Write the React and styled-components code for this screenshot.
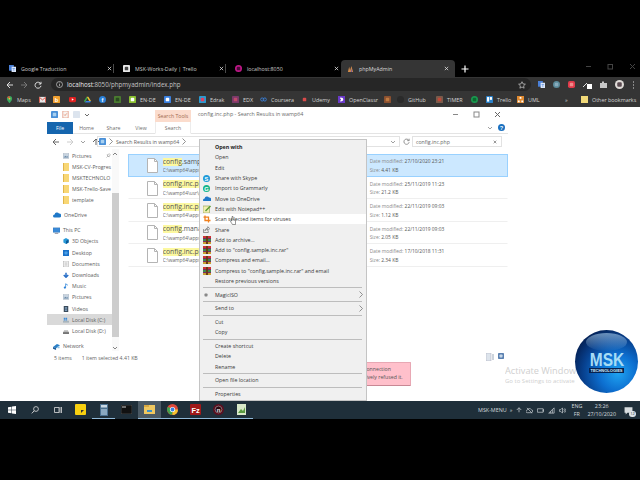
import React from 'react';
import styled, { createGlobalStyle } from 'styled-components';

const GlobalStyle = createGlobalStyle`
  html, body { margin: 0; padding: 0; background: #000; }
  * { box-sizing: border-box; }
`;

const uiFont = `'Open Sans', 'Liberation Sans', sans-serif`;

const Screen = styled.div`
  width: 640px;
  height: 480px;
  background: #000;
  overflow: hidden;
  display: flex;
  flex-direction: column;
  font-family: ${uiFont};
`;

// chrome
const TabStrip = styled.div`
  margin-top: 60px;
  height: 17px;
  display: flex;
  align-items: stretch;
  flex-shrink: 0;
`;
const Tab = styled.div`
  width: ${(p) => p.$w}px;
  display: flex;
  align-items: center;
  gap: 5px;
  padding: ${(p) => (p.$active ? '0 6px 0 6px' : '0 2px 0 9px')};
  color: ${(p) => (p.$active ? '#dcdcdc' : '#c8c8c8')};
  background: ${(p) => (p.$active ? '#353535' : 'transparent')};
  border-radius: ${(p) => (p.$active ? '4px 4px 0 0' : '0')};
  font-size: 5.3px;
  white-space: nowrap;
`;
const TabClose = styled.span`
  margin-left: auto;
  display: flex;
`;
const TabDivider = styled.div`
  width: 1px;
  height: 9px;
  align-self: center;
  background: #4a4a4a;
  margin-left: -1px;
`;
const NewTab = styled.span`
  display: flex;
  align-items: center;
  margin-left: 6px;
`;
const WinButtons = styled.div`
  margin-left: auto;
  display: flex;
  align-items: flex-start;
  gap: 15px;
  padding: 3px 4px 0 0;
`;
const Toolbar = styled.div`
  height: 15px;
  background: #353535;
  display: flex;
  align-items: center;
  padding-left: 6px;
  flex-shrink: 0;
`;
const NavArrows = styled.div`
  display: flex;
  align-items: center;
  gap: 6px;
  width: 45px;
`;
const Omnibox = styled.div`
  width: 480px;
  height: 13px;
  background: #262626;
  border-radius: 7px;
  display: flex;
  align-items: center;
  gap: 4px;
  padding: 0 5px;
  color: #c4c4c4;
  font-size: 6.2px;
`;
const UrlHost = styled.span`
  color: #e8e8e8;
`;
const StarSlot = styled.span`
  margin-left: auto;
  display: flex;
`;
const Extensions = styled.div`
  flex: 1;
  display: flex;
  align-items: center;
  gap: 8px;
  padding-left: 7px;
`;
const Bookmarks = styled.div`
  height: 15px;
  background: #353535;
  display: flex;
  align-items: center;
  padding-left: 6px;
  flex-shrink: 0;
`;
const Bookmark = styled.div`
  width: ${(p) => p.$w}px;
  display: flex;
  align-items: center;
  gap: 4px;
  color: #d4d4d4;
  font-size: 5.4px;
  white-space: nowrap;
  flex-shrink: 0;
`;

// page below the browser chrome
const Page = styled.div`
  position: relative;
  height: 294px;
  background: #fff;
  flex-shrink: 0;
  padding-left: 47px;
  overflow: hidden;
`;
const Explorer = styled.div`
  width: 461px;
  display: flex;
  flex-direction: column;
  font-size: 5.2px;
  color: #5c5c5c;
`;
const TitleRow = styled.div`
  height: 15px;
  display: flex;
  align-items: flex-end;
`;
const QuickAccess = styled.div`
  width: 108px;
  height: 15px;
  display: flex;
  align-items: center;
  gap: 4px;
  padding-left: 4px;
`;
const ToolsTab = styled.div`
  width: 36px;
  height: 12px;
  background: #fbdccd;
  color: #a26a50;
  font-size: 5.2px;
  display: flex;
  align-items: center;
  justify-content: center;
`;
const WindowTitle = styled.span`
  height: 15px;
  line-height: 15px;
  margin-left: 7px;
  color: #6a6a6a;
  font-size: 5.4px;
`;
const WindowControls = styled.div`
  margin-left: auto;
  height: 15px;
  display: flex;
  align-items: center;
  gap: 14px;
  padding-right: 7px;
`;
const Ribbon = styled.div`
  height: 12px;
  display: flex;
  border-bottom: 1px solid #e4e4e4;
`;
const RibbonTab = styled.div`
  width: ${(p) => p.$w}px;
  height: ${(p) => (p.$file || p.$search ? '12px' : '11px')};
  display: flex;
  align-items: center;
  justify-content: center;
  background: ${(p) => (p.$file ? '#1565ae' : '#fff')};
  color: ${(p) => (p.$file ? '#fff' : '#6e6e6e')};
  border: ${(p) => (p.$search ? '1px solid #ececec' : 'none')};
  border-top: none;
  border-bottom: ${(p) => (p.$search ? '1px solid #fff' : 'none')};
`;
const RibbonEnd = styled.div`
  margin-left: auto;
  display: flex;
  align-items: center;
  gap: 5px;
  padding-right: 3px;
`;
const NavRow = styled.div`
  height: 15px;
  display: flex;
  align-items: center;
  padding-left: 5px;
`;
const NavButtons = styled.div`
  width: 45px;
  display: flex;
  align-items: center;
  gap: 6px;
`;
const AddressBox = styled.div`
  width: 303px;
  height: 11px;
  border: 1px solid #e2e2e2;
  display: flex;
  align-items: center;
  gap: 3px;
  padding: 0 3px 0 1px;
`;
const AddressEnd = styled.span`
  margin-left: auto;
  display: flex;
`;
const Refresh = styled.div`
  width: 12px;
  display: flex;
  justify-content: center;
`;
const SearchBox = styled.div`
  width: 90px;
  height: 11px;
  border: 1px solid #e2e2e2;
  display: flex;
  align-items: center;
  justify-content: space-between;
  padding: 0 4px 0 3px;
  color: #666;
`;
const SearchClear = styled.span`
  display: flex;
`;
const Content = styled.div`
  height: 204px;
  display: flex;
`;
const Sidebar = styled.div`
  width: 66px;
  padding-top: 1px;
  display: flex;
  flex-direction: column;
  overflow: hidden;
`;
const TreeRow = styled.div`
  height: 11.2px;
  margin-top: ${(p) => p.$gap || 0}px;
  padding-left: ${(p) => (p.$top ? 6 : 16)}px;
  display: flex;
  align-items: center;
  gap: 3px;
  white-space: nowrap;
  overflow: hidden;
  background: ${(p) => (p.$selected ? '#d9d9d9' : 'transparent')};
  flex-shrink: 0;
`;
const Pin = styled.span`
  margin-left: auto;
  padding-right: 1px;
  display: flex;
`;
const Scrollbar = styled.div`
  width: 7px;
  height: 202px;
  background: #f9f9f9;
  display: flex;
  flex-direction: column;
  align-items: center;
`;
const ScrollEnd = styled.div`
  height: 6px;
  display: flex;
  align-items: center;
  justify-content: center;
  margin-top: ${(p) => (p.$bottom ? 'auto' : '2px')};
  transform: ${(p) => (p.$bottom ? 'none' : 'rotate(180deg)')};
`;
const ScrollThumb = styled.div`
  margin-top: 36px;
  width: 7px;
  height: 144px;
  background: #cdcdcd;
`;
const Results = styled.div`
  width: 388px;
  margin-left: 9px;
  padding-top: 5px;
`;
const ResultRow = styled.div`
  height: ${(p) => (p.$selected ? 23 : 22.4)}px;
  display: flex;
  align-items: center;
  background: ${(p) => (p.$selected ? '#cce8ff' : '#fff')};
  border: 1px solid ${(p) => (p.$selected ? '#99d1ff' : 'transparent')};
  border-bottom-color: ${(p) => (p.$selected ? '#99d1ff' : '#efefef')};
  padding-left: 18px;
`;
const FileCell = styled.div`
  width: 223px;
  display: flex;
  align-items: center;
  gap: 5px;
`;
const FileText = styled.div`
  width: 36px;
  overflow: hidden;
  display: flex;
  flex-direction: column;
  gap: 1.5px;
  white-space: nowrap;
`;
const FileName = styled.div`
  font-size: 6.8px;
  line-height: 8px;
  color: #555;
`;
const Hit = styled.span`
  background: #fcf8a0;
`;
const FilePath = styled.div`
  font-size: 4.8px;
  line-height: 6px;
  color: #666;
`;
const MetaCell = styled.div`
  display: flex;
  flex-direction: column;
  gap: 2.5px;
  font-size: 4.9px;
  line-height: 6px;
  white-space: nowrap;
  color: #8a8a8a;
`;
const MetaValue = styled.span`
  color: #555;
`;
const StatusBar = styled.div`
  height: 10px;
  display: flex;
  align-items: center;
  gap: 10px;
  padding-left: 7px;
  color: #666;
`;

// overlays on the page
const Menu = styled.div`
  position: absolute;
  left: 199px;
  top: 32px;
  width: 168px;
  height: 262px;
  background: #f0f0f0;
  border: 1px solid #c4c4c4;
  padding-top: 2px;
  font-size: 5.3px;
  color: #3a3a3a;
  display: flex;
  flex-direction: column;
`;
const MenuItem = styled.div`
  height: 10.3px;
  flex-shrink: 0;
  padding-left: 3px;
  padding-right: 3px;
  display: flex;
  align-items: center;
  white-space: nowrap;
  font-weight: ${(p) => (p.$bold ? 700 : 400)};
  background: ${(p) => (p.$hover ? '#fff' : 'transparent')};
  color: ${(p) => (p.$bold ? '#222' : '#3a3a3a')};
`;
const MenuIcon = styled.span`
  width: 12px;
  height: 8px;
  display: flex;
  align-items: center;
  flex-shrink: 0;
`;
const MenuArrow = styled.span`
  margin-left: auto;
  display: flex;
`;
const MenuLine = styled.div`
  height: 1px;
  margin: 1.2px 4px 1.2px 3px;
  background: #bdbdbd;
  flex-shrink: 0;
`;
const Cursor = styled.svg`
  position: absolute;
  left: 230px;
  top: 109px;
`;
const ErrorBox = styled.div`
  position: absolute;
  left: 340px;
  top: 255px;
  width: 71px;
  height: 24px;
  background: #ffc0cb;
  border: 1px solid #e8a8b4;
  border-bottom-color: #c88894;
  border-radius: 1px;
  padding: 2px 0 0 18px;
  color: #555;
  font-size: 5.2px;
  line-height: 8px;
  text-indent: 5px;
  white-space: nowrap;
`;
const PageIcons = styled.div`
  position: absolute;
  left: 486px;
  top: 246px;
  display: flex;
  gap: 4px;
`;
const Activate = styled.div`
  position: absolute;
  left: 505px;
  top: 257px;
  width: 71px;
  overflow: hidden;
  color: #cfcfcf;
  font-size: 9.2px;
  line-height: 13px;
  white-space: nowrap;
`;
const ActivateHint = styled.div`
  font-size: 6px;
  line-height: 9px;
`;
const Logo = styled.div`
  position: absolute;
  left: 575px;
  top: 223px;
  width: 63px;
  height: 63px;
  border-radius: 50%;
  overflow: hidden;
  background: radial-gradient(circle at 68% 68%, #1fa4f2 0%, #0d6fd0 30%, #073f8c 58%, #041c4c 82%, #020a20 100%);
  display: flex;
  flex-direction: column;
  align-items: center;
  justify-content: center;
  padding-top: 3px;
  &::before {
    content: '';
    position: absolute;
    left: 11px;
    top: 3px;
    width: 41px;
    height: 18px;
    border-radius: 50%;
    background: linear-gradient(180deg, rgba(190, 225, 250, 0.55), rgba(60, 130, 200, 0.05));
  }
`;
const LogoText = styled.div`
  font-family: 'Liberation Sans', sans-serif;
  font-weight: 700;
  font-size: 18px;
  line-height: 14px;
  color: #a6dcf5;
  transform: scaleX(0.86);
`;
const LogoSub = styled.div`
  font-family: 'Liberation Sans', sans-serif;
  font-weight: 700;
  font-size: 4px;
  line-height: 5px;
  padding: 0 1px;
  margin-top: 1px;
  background: #06224f;
  color: #d5ecf8;
`;

// taskbar
const Taskbar = styled.div`
  height: 18px;
  background: #1f2f3a;
  display: flex;
  align-items: stretch;
  flex-shrink: 0;
  color: #d5dade;
`;
const TaskSlot = styled.div`
  width: 23px;
  display: flex;
  align-items: center;
  justify-content: center;
  flex-shrink: 0;
  background: ${(p) => (p.$active ? '#4b5a65' : 'transparent')};
  border-bottom: 1px solid ${(p) => (p.$open ? '#8fb8d8' : 'transparent')};
`;
const Tray = styled.div`
  margin-left: auto;
  display: flex;
  align-items: center;
  font-size: 5.4px;
`;
const TrayIcons = styled.div`
  display: flex;
  align-items: center;
  gap: 4px;
  margin: 0 5px 0 3px;
`;
const Clock = styled.div`
  display: flex;
  flex-direction: column;
  align-items: center;
  gap: 2px;
  line-height: 6px;
  margin-left: ${(p) => p.$gap || 0}px;
`;
const NotifySlot = styled.span`
  position: relative;
  margin: 0 7px 0 8px;
  display: flex;
`;
const NotifyBadge = styled.span`
  position: absolute;
  right: -3px;
  bottom: -2px;
  width: 7px;
  height: 6px;
  border-radius: 3px;
  background: #dfe4e8;
  color: #1f2f3a;
  font-size: 4px;
  line-height: 6px;
  text-align: center;
`;

const Ic = ({ s = 7, v = 8, children }) => (
  <svg width={s} height={s} viewBox={`0 0 ${v} ${v}`} style={{ flexShrink: 0 }}>
    {children}
  </svg>
);

const letter = { fontFamily: 'Liberation Sans, sans-serif', fontWeight: 700, textAnchor: 'middle' };

const Doc = () => (
  <svg width="11" height="15" viewBox="0 0 11 15">
    <path d="M.5.500h7l3 3v11H.5z" fill="#fff" stroke="#b4b4b4" />
    <path d="M7.500.500v3h3" fill="none" stroke="#b4b4b4" />
  </svg>
);

const Folder = () => (
  <svg width="6" height="8" viewBox="0 0 6 8">
    <rect width="6" height="8" fill="#f8d775" />
    <rect width="1" height="8" fill="#e0b54a" />
  </svg>
);

// small coloured icon used where the picture is too small to tell more
const Dot = ({ c, s = 7, r = 1, inner }) => (
  <Ic s={s}>
    <rect width="8" height="8" rx={r} fill={c} />
    {inner && <rect x="2" y="2" width="4" height="4" rx="1" fill={inner} />}
  </Ic>
);

const Arrow = ({ dir = 'left', c = '#dcdcdc', s = 8, w = 1 }) => {
  const d = {
    left: 'M7 4H1M4 1 1 4l3 3',
    right: 'M1 4h6M4 1l3 3-3 3',
    up: 'M4 7V1M1 4l3-3 3 3',
    down: 'M4 1v6M1 4l3 3 3-3',
  }[dir];
  return (
    <Ic s={s}>
      <path d={d} fill="none" stroke={c} strokeWidth={w} />
    </Ic>
  );
};

const Chevron = ({ c = '#888', s = 6 }) => (
  <Ic s={s} v={6}>
    <path d="M1 2l2 2 2-2" fill="none" stroke={c} strokeWidth=".8" />
  </Ic>
);

const Caret = () => (
  <svg width="4" height="7" viewBox="0 0 4 7">
    <path d="M.5.500 3.500 3.500.5 6.500" fill="none" stroke="#777" strokeWidth=".8" />
  </svg>
);

const Cross = ({ c = '#e4e4e4', s = 5, w = 0.9 }) => (
  <Ic s={s} v={6}>
    <path d="M1 1l4 4M5 1 1 5" stroke={c} strokeWidth={w} />
  </Ic>
);

const Winrar = () => (
  <Ic s={8}>
    <rect width="8" height="8" fill="#7a2a6a" />
    <rect width="8" height="2" fill="#c33" />
    <rect y="3" width="8" height="2" fill="#3a8a4a" />
    <rect y="6" width="8" height="2" fill="#c8a030" />
    <rect x="3" width="2" height="8" fill="#6b3a1a" />
  </Ic>
);

const Cloud = ({ c = '#1e78c8', s = 8 }) => (
  <svg width={s} height={s * 0.7} viewBox="0 0 10 7">
    <path d="M2 7a2 2 0 0 1 0-4 3 3 0 0 1 5.500-1A2.500 2.500 0 0 1 8 7z" fill={c} />
  </svg>
);

const Badge = ({ c, t, tc = '#fff', r = 4, s = 7, f = 6.5 }) => (
  <Ic s={s}>
    <rect width="8" height="8" rx={r} fill={c} />
    <text x="4" y="6.300" fontSize={f} fill={tc} style={letter}>{t}</text>
  </Ic>
);

const Notepad = () => (
  <Ic s={8}>
    <rect y="1" width="6.500" height="7" fill="#f2efb0" stroke="#8a9a50" strokeWidth=".6" />
    <path d="M2 5.500 7 .5l1 1-5 5z" fill="#5a9a30" />
  </Ic>
);

const Scan = () => (
  <Ic s={8}>
    <path d="M2 .5v5h5.500M.5 2.200h5v5.300" fill="none" stroke="#f0801e" strokeWidth="1.300" />
  </Ic>
);

const ShareIcon = () => (
  <Ic>
    <path d="M.5 3.500v4h5.500V5.500M2 5.500C2.500 3.500 4 2.500 5.500 2.500V.8L7.700 3 5.500 5.200V3.800C4 3.800 3 4.400 2 5.500z" fill="none" stroke="#555" strokeWidth=".7" />
  </Ic>
);

const MapsPin = () => (
  <Ic>
    <path d="M4 0a3 3 0 0 1 3 3C7 5 4 8 4 8S1 5 1 3a3 3 0 0 1 3-3z" fill="#3aa860" />
    <path d="M1.300 1.800A3 3 0 0 1 4 0v3z" fill="#e84a3a" />
    <circle cx="4" cy="3" r="1" fill="#f4c430" />
  </Ic>
);
const Gmail = () => (
  <Ic>
    <rect y="1" width="8" height="6.500" fill="#e8e8e8" />
    <path d="M.5 7.500V1.500L4 4.500l3.500-3v6" fill="none" stroke="#d84a3a" strokeWidth="1" />
  </Ic>
);
const YouTube = () => (
  <Ic>
    <rect y="1" width="8" height="6" rx="1.500" fill="#e02020" />
    <path d="M3.200 2.700 5.500 4 3.200 5.300z" fill="#fff" />
  </Ic>
);
const Drive = () => (
  <Ic>
    <path d="M3 .8h2l3 5H6z" fill="#f4c430" />
    <path d="M3 .8 0 5.800l1 1.700 3-5z" fill="#3aa850" />
    <path d="M1 7.500h6l1-1.700H2.200z" fill="#3a80e0" />
  </Ic>
);
const Coursera = () => (
  <Ic>
    <circle cx="2.500" cy="4" r="1.800" fill="none" stroke="#3a80d8" />
    <circle cx="5.500" cy="4" r="1.800" fill="none" stroke="#3a80d8" />
  </Ic>
);
const OpenClass = () => (
  <Ic>
    <rect width="8" height="8" fill="#6a3ac8" />
    <path d="M2.500 1.800c3 0 3.500 1 3.500 2.200S5.500 6.200 2.500 6.200V5a1 1 0 0 0 0-2z" fill="#fff" />
  </Ic>
);
const Trello = () => (
  <Ic>
    <rect width="8" height="8" rx="1" fill="#2a80c8" />
    <rect x="1.200" y="1.200" width="2.400" height="5.200" fill="#fff" />
    <rect x="4.400" y="1.200" width="2.400" height="3.200" fill="#fff" />
  </Ic>
);
const Uml = () => (
  <Ic>
    <rect width="8" height="8" fill="#e08a30" />
    <path d="M3 1h2v2H3zM1 5h2v2H1zM5 5h2v2H5z" fill="#fff" />
  </Ic>
);
const Translate = () => (
  <Ic>
    <rect width="5.500" height="6.500" fill="#4a80d8" />
    <rect x="3" y="2" width="5" height="6" fill="#dbe6f8" />
    <path d="M4 4h3M5.500 3.500V7" stroke="#4a80d8" strokeWidth=".6" />
  </Ic>
);
const PhpMyAdmin = () => (
  <Ic>
    <path d="M1 8 2.500 2 4 8zM3 8 5 1l2 7z" fill="#d08a4a" />
    <path d="M4.300 8 5 4l.8 4z" fill="#7a5aa0" />
  </Ic>
);
const MonitorIcon = () => (
  <Ic>
    <rect y="1" width="8" height="5" fill="#3a8ad8" stroke="#2a6aa8" strokeWidth=".4" />
    <path d="M2 7.300h4" stroke="#889" />
  </Ic>
);
const CubeIcon = () => (
  <Ic s={6}>
    <path d="M4 0l3.500 2v4L4 8 .5 6V2z" fill="#2a9ad8" />
    <path d="M4 4v4l3.500-2V2z" fill="#0a5a98" />
  </Ic>
);
const DocumentsIcon = () => (
  <Ic s={6}>
    <rect x="1" width="6" height="8" fill="#f4f4f4" stroke="#999" strokeWidth=".6" />
    <path d="M2.200 2.500h3.600M2.200 4h3.600M2.200 5.500h3.600" stroke="#999" strokeWidth=".5" />
  </Ic>
);
const MusicIcon = () => (
  <Ic s={6}>
    <path d="M3.500 1v5" stroke="#2a80d8" strokeWidth="1" />
    <circle cx="2.500" cy="6" r="1.500" fill="#2a80d8" />
    <path d="M3.500 1 6.500 3" stroke="#2a80d8" />
  </Ic>
);
const PicturesIcon = () => (
  <Ic s={6}>
    <rect y="1" width="8" height="6" fill="#c8d4e0" stroke="#8a9aac" strokeWidth=".5" />
    <path d="M1 6l2-2.500L5 5l1-1 1 2z" fill="#6a8aa8" />
  </Ic>
);
const VideosIcon = () => (
  <Ic s={6}>
    <rect x="1" width="6" height="8" fill="#3a4a5a" />
    <rect x="2.500" y="1.500" width="3" height="2.200" fill="#7a9ab8" />
    <rect x="2.500" y="4.500" width="3" height="2.200" fill="#7a9ab8" />
  </Ic>
);
const DiskC = () => (
  <Ic s={6}>
    <rect x="0" y="5" width="8" height="2.500" fill="#a8b4bc" />
    <path d="M1 1h2v1.500H1zM3.500 1h2v1.500h-2zM1 3h2v1.500H1zM3.500 3h2v1.500h-2z" fill="#3a8ad8" />
  </Ic>
);
const DiskD = () => (
  <Ic s={6}>
    <path d="M1.500 3h5L8 6v1.500H0V6z" fill="#b8b8b8" />
    <rect y="6" width="8" height="1.500" fill="#444" />
  </Ic>
);
const NetworkIcon = () => (
  <Ic>
    <path d="M0 4.500 4.500 1 8 2.500 3.500 6z" fill="#2a80c8" />
    <path d="M0 4.500v2L3.500 8V6z" fill="#1a5a98" />
    <path d="M5 4h2.500v2H5z" fill="#8ac0e8" />
  </Ic>
);

const tabs = [
  { w: 114, title: 'Google Traduction', icon: <Translate /> },
  { w: 112, title: 'MSK-Works-Daily | Trello', icon: <Dot c="#e8e8e8" inner="#444" /> },
  { w: 115, title: 'localhost:8050', icon: <Dot c="#c2188a" r={4} inner="#4a0b38" /> },
  { w: 114, title: 'phpMyAdmin', icon: <PhpMyAdmin />, active: true },
];

const bookmarks = [
  { w: 33, label: 'Maps', icon: <MapsPin /> },
  { w: 14, icon: <Gmail /> },
  { w: 16, icon: <Badge c="#f0a030" r={1} t="b" /> },
  { w: 15, icon: <YouTube /> },
  { w: 15, icon: <Drive /> },
  { w: 15, icon: <Badge c="#2a80d8" t="f" /> },
  { w: 15, icon: <Dot c="#4a7a30" inner="#2a4a20" /> },
  { w: 35, label: 'EN-DE', icon: <Dot c="#8ac030" inner="#fff" /> },
  { w: 35, label: 'EN-DE', icon: <Dot c="#3a80e0" inner="#fff" /> },
  { w: 33, label: 'Edrak', icon: <Dot c="#2a9ad0" inner="#e04060" /> },
  { w: 28, label: 'EDX', icon: <Dot c="#7a3a6a" inner="#c04a6a" /> },
  { w: 41, label: 'Coursera', icon: <Coursera /> },
  { w: 37, label: 'Udemy', icon: <Dot c="#353535" inner="#d84a4a" /> },
  { w: 46, label: 'OpenClassr', icon: <OpenClass /> },
  { w: 13, icon: <Dot c="#8a5030" inner="#c07a40" /> },
  { w: 39, label: 'GitHub', icon: <Dot c="#2a2a2a" r={4} /> },
  { w: 35, label: 'TIMER', icon: <Dot c="#7a5a4a" inner="#c04a3a" /> },
  { w: 15, icon: <Dot c="#1a9a50" r={4} inner="#0a6a30" /> },
  { w: 31, label: 'Trello', icon: <Trello /> },
  { w: 48, label: 'UML', icon: <Uml /> },
  { w: 16, label: '»' },
  { w: 60, label: 'Other bookmarks', icon: <Dot c="#f0d878" r={0} /> },
];

const tree = [
  { label: 'Pictures', icon: <PicturesIcon />, pin: true },
  { label: 'MSK-CV-Progres', icon: <Folder /> },
  { label: 'MSKTECHNOLO', icon: <Folder /> },
  { label: 'MSK-Trello-Save', icon: <Folder /> },
  { label: 'template', icon: <Folder /> },
  { label: 'OneDrive', icon: <Cloud />, top: true, gap: 3.5 },
  { label: 'This PC', icon: <MonitorIcon />, top: true, gap: 4 },
  { label: '3D Objects', icon: <CubeIcon /> },
  { label: 'Desktop', icon: <Dot c="#1a70c8" s={6} r={0} inner="#4aa0e8" /> },
  { label: 'Documents', icon: <DocumentsIcon /> },
  { label: 'Downloads', icon: <Arrow dir="down" c="#2a70c8" s={6} w={2} /> },
  { label: 'Music', icon: <MusicIcon /> },
  { label: 'Pictures', icon: <PicturesIcon /> },
  { label: 'Videos', icon: <VideosIcon /> },
  { label: 'Local Disk (C:)', icon: <DiskC />, selected: true },
  { label: 'Local Disk (D:)', icon: <DiskD /> },
  { label: 'Network', icon: <NetworkIcon />, top: true, gap: 4 },
];

const results = [
  { hit: 'config', rest: '.sample.inc.php', path: 'C:\\wamp64\\apps\\phpmyadmin', date: '27/10/2020 23:21', size: '4.41 KB', selected: true },
  { hit: 'config.inc.php', rest: '', path: 'C:\\wamp64\\usr\\phpmyadmin', date: '25/11/2019 11:23', size: '21.2 KB' },
  { hit: 'config.inc.php', rest: '', path: 'C:\\wamp64\\apps\\phpmyadmin', date: '22/11/2019 09:03', size: '1.12 KB' },
  { hit: 'config', rest: '.manager.inc.php', path: 'C:\\wamp64\\apps\\phpmyadmin', date: '22/11/2019 09:03', size: '2.05 KB' },
  { hit: 'config.inc.php', rest: '', path: 'C:\\wamp64\\apps\\phpmyadmin', date: '17/10/2018 11:31', size: '2.34 KB' },
];

const menu = [
  { label: 'Open with', bold: true },
  { label: 'Open' },
  { label: 'Edit' },
  { label: 'Share with Skype', icon: <Badge c="#1e9ad8" t="S" /> },
  { label: 'Import to Grammarly', icon: <Badge c="#15b48a" t="G" /> },
  { label: 'Move to OneDrive', icon: <Cloud s={8} /> },
  { label: 'Edit with Notepad++', icon: <Notepad /> },
  { label: 'Scan selected items for viruses', hover: true, icon: <Scan /> },
  { label: 'Share', icon: <ShareIcon /> },
  { label: 'Add to archive...', icon: <Winrar /> },
  { label: 'Add to "config.sample.inc.rar"', icon: <Winrar /> },
  { label: 'Compress and email...', icon: <Winrar /> },
  { label: 'Compress to "config.sample.inc.rar" and email', icon: <Winrar /> },
  { label: 'Restore previous versions' },
  { line: true },
  { label: 'MagicISO', arrow: true, icon: <Dot c="#f0f0f0" s={6} r={4} inner="#888" /> },
  { line: true },
  { label: 'Send to', arrow: true },
  { line: true },
  { label: 'Cut' },
  { label: 'Copy' },
  { line: true },
  { label: 'Create shortcut' },
  { label: 'Delete' },
  { label: 'Rename' },
  { line: true },
  { label: 'Open file location' },
  { line: true },
  { label: 'Properties' },
];

const WinLogo = () => (
  <Ic s={8}>
    <path d="M0 1.200 3.500.7v3H0zM4 .6 8 0v3.700H4zM0 4.200h3.500v3L0 6.800zM4 4.200h4V8l-4-.6z" fill="#fff" />
  </Ic>
);

const Chrome = () => (
  <svg width="11" height="11" viewBox="0 0 12 12">
    <circle cx="6" cy="6" r="6" fill="#e0483a" />
    <path d="M6 6 .9 9.100A6 6 0 0 1 1 3z" fill="#3aa850" />
    <path d="M6 6 .9 9.100A6 6 0 0 0 6 12z" fill="#3aa850" />
    <path d="M6 6h6a6 6 0 0 1-6 6z" fill="#f4c430" />
    <circle cx="6" cy="6" r="2.800" fill="#fff" />
    <circle cx="6" cy="6" r="2.100" fill="#3a80e0" />
  </svg>
);

const task = [
  { icon: <WinLogo /> },
  { icon: <Ic s={8}><circle cx="5" cy="3" r="2.400" fill="none" stroke="#ddd" strokeWidth=".8" /><path d="M3.200 4.800.8 7.400" stroke="#ddd" strokeWidth=".9" /></Ic> },
  { icon: <Ic s={8}><path d="M.5 1.500h4.500v5H.5zM6 1v6M7.500 1v6" fill="none" stroke="#ddd" strokeWidth=".8" /></Ic> },
  { icon: <svg width="11" height="11" viewBox="0 0 11 11"><rect width="11" height="11" rx="1" fill="#f8d010" /><path d="M6 9l3-3H6z" fill="#333" /></svg> },
  { open: true, icon: <svg width="8" height="12" viewBox="0 0 8 12"><rect width="8" height="12" fill="#4a7090" /><rect x="1" y="1" width="6" height="2.500" fill="#c8d8e4" /><rect x="1" y="5" width="6" height="6" fill="#8aa8c0" /></svg> },
  { icon: <svg width="11" height="9" viewBox="0 0 11 9"><rect width="11" height="9" fill="#111" stroke="#888" strokeWidth=".4" /><rect x="1" y="1.500" width="4" height="1" fill="#ccc" /></svg> },
  { active: true, open: true, icon: <svg width="11" height="9" viewBox="0 0 11 9"><rect width="11" height="9" fill="#f0c860" /><rect width="5" height="2" fill="#d8a840" /><rect x="3" y="5" width="5" height="2" fill="#3a90c8" /></svg> },
  { open: true, icon: <Chrome /> },
  { open: true, icon: <Badge c="#a01818" s={11} r={0.7} f={5.4} t="Fz" /> },
  { open: true, icon: <svg width="11" height="11" viewBox="0 0 11 11"><circle cx="5.500" cy="5.500" r="5.500" fill="#5a1020" /><circle cx="5.500" cy="5.500" r="3.400" fill="#2a0810" stroke="#d8c8c8" strokeWidth=".5" /><text x="5.500" y="7.600" fontSize="6" fill="#eee" style={letter}>n</text></svg> },
  { open: true, icon: <svg width="9" height="11" viewBox="0 0 9 11"><rect width="9" height="11" fill="#d8e8c8" /><path d="M1 9l3-4 2 2 2-4v6z" fill="#5a9a40" /></svg> },
];

const trayStroke = { fill: 'none', stroke: '#c8ced2', strokeWidth: 0.8 };
const trayIcons = [
  <path key="c" d="M1.500 6.500a1.500 1.500 0 0 1 0-3A2.500 2.500 0 0 1 6 3a1.800 1.800 0 0 1 .5 3.500zM1 1l6 6" {...trayStroke} />,
  <path key="b" d="M.5 2h6.500v4H.5zM7 3.200h1v1.600H7z" {...trayStroke} />,
  <path key="n" d="M.8 7 7 1v6zM3 7V5M5 7V3" {...trayStroke} />,
  <path key="s" d="M.5 3h1.500L4 1v6L2 5H.5zM5.500 2.500a2.200 2.200 0 0 1 0 3M6.500 1.500a3.500 3.500 0 0 1 0 5" {...trayStroke} />,
];

export default function App() {
  return (
    <Screen>
      <GlobalStyle />
      <TabStrip>
        {tabs.map((t, i) => (
          <React.Fragment key={t.title}>
            <Tab $w={t.w} $active={t.active}>
              {t.icon}
              {t.title}
              <TabClose><Cross /></TabClose>
            </Tab>
            {i < 2 && <TabDivider />}
          </React.Fragment>
        ))}
        <NewTab>
          <Ic s={8}><path d="M4 .5v7M.5 4h7" stroke="#fff" strokeWidth="1.200" /></Ic>
        </NewTab>
        <WinButtons>
          <Ic s={7} v={7}><path d="M1 3.500h5" stroke="#444" /></Ic>
          <Ic s={7} v={7}><rect x="1" y="1.500" width="4.500" height="4.500" fill="none" stroke="#444" /></Ic>
          <Ic s={7} v={7}><path d="M1 1l5 5M6 1 1 6" stroke="#444" /></Ic>
        </WinButtons>
      </TabStrip>
      <Toolbar>
        <NavArrows>
          <Arrow dir="left" />
          <Arrow dir="right" c="#777" />
          <Ic s={8}><path d="M6.800 3A3 3 0 1 0 7 4.800M7 .8V3H4.800" fill="none" stroke="#dcdcdc" /></Ic>
        </NavArrows>
        <Omnibox>
          <Ic s={7} v={7}><circle cx="3.500" cy="3.500" r="3" fill="none" stroke="#ccc" strokeWidth=".7" /><path d="M3.500 3v2.200M3.500 1.600v.7" stroke="#ccc" strokeWidth=".7" /></Ic>
          <span><UrlHost>localhost</UrlHost>:8050/phpmyadmin/index.php</span>
          <StarSlot>
            <Ic s={8}><path d="M4 .7l1 2.200 2.400.3-1.800 1.600.5 2.400L4 6l-2.100 1.200.5-2.400L.6 3.200 3 2.900z" fill="none" stroke="#ccc" strokeWidth=".7" /></Ic>
          </StarSlot>
        </Omnibox>
        <Extensions>
          <Translate />
          <Dot c="#5a8a9a" r={4} inner="#8ab" />
          <Dot c="#e03a4a" r={2} inner="#f08a8a" />
          <svg width="9" height="8" viewBox="0 0 9 8"><path d="M0 6l4-4" stroke="#ddd" /><rect x="4" y="3" width="5" height="5" fill="#fff" /></svg>
          <Ic s={7} v={7}><path d="M0 2h2V.5h2V2h3v5H0z" fill="#c8c8c8" /></Ic>
          <Dot c="#e0dcd8" s={9} r={4} inner="#5a4a50" />
          <svg width="3" height="8" viewBox="0 0 3 8"><path d="M1.500.5v1M1.500 3.500v1M1.500 6.500v1" stroke="#ddd" /></svg>
        </Extensions>
      </Toolbar>
      <Bookmarks>
        {bookmarks.map((b, i) => (
          <Bookmark key={i} $w={b.w}>
            {b.icon}
            {b.label}
          </Bookmark>
        ))}
      </Bookmarks>

      <Page>
        <Explorer>
          <TitleRow>
            <QuickAccess>
              <Dot c="#4a90d8" s={7} inner="#a8d0f0" />
              <Ic><rect x="1" width="6" height="8" fill="#f8f4f0" stroke="#d86a4a" strokeWidth=".6" /><path d="M2.500 4l1 1.200 2-2.500" fill="none" stroke="#d86a4a" strokeWidth=".7" /></Ic>
              <Dot c="#dce4ee" s={7} />
              <Chevron c="#444" />
            </QuickAccess>
            <ToolsTab>Search Tools</ToolsTab>
            <WindowTitle>config.inc.php - Search Results in wamp64</WindowTitle>
            <WindowControls>
              <Ic s={7} v={7}><path d="M1 3.500h5" stroke="#888" /></Ic>
              <Ic s={7} v={7}><rect x="1" y="1" width="5" height="5" fill="none" stroke="#888" /></Ic>
              <Ic s={7} v={7}><path d="M1 1l5 5M6 1 1 6" stroke="#666" /></Ic>
            </WindowControls>
          </TitleRow>
          <Ribbon>
            <RibbonTab $w={26} $file>File</RibbonTab>
            <RibbonTab $w={27}>Home</RibbonTab>
            <RibbonTab $w={27}>Share</RibbonTab>
            <RibbonTab $w={28}>View</RibbonTab>
            <RibbonTab $w={36} $search>Search</RibbonTab>
            <RibbonEnd>
              <Chevron />
              <Badge c="#1a70c0" t="?" />
            </RibbonEnd>
          </Ribbon>
          <NavRow>
            <NavButtons>
              <Arrow dir="left" c="#666" />
              <Arrow dir="right" c="#ccc" />
              <Chevron />
              <Arrow dir="up" c="#666" />
            </NavButtons>
            <AddressBox>
              <Dot c="#4a90d8" s={7} inner="#a8d0f0" />
              <Caret />
              <span>Search Results in wamp64</span>
              <Caret />
              <AddressEnd><Chevron /></AddressEnd>
            </AddressBox>
            <Refresh>
              <Ic><path d="M6.800 3A3 3 0 1 0 7 4.800M7 .8V3H4.800" fill="none" stroke="#888" /></Ic>
            </Refresh>
            <SearchBox>
              config.inc.php
              <SearchClear><Cross c="#555" s={4} /></SearchClear>
            </SearchBox>
          </NavRow>
          <Content>
            <Sidebar>
              {tree.map((t, i) => (
                <TreeRow key={i} $top={t.top} $gap={t.gap} $selected={t.selected}>
                  {t.icon}
                  {t.label}
                  {t.pin && (
                    <Pin>
                      <Ic s={5}><path d="M7 3 5 1 3 3 1.500 3 5 6.500V5zM3 5 .8 7.200" fill="none" stroke="#777" strokeWidth=".8" /></Ic>
                    </Pin>
                  )}
                </TreeRow>
              ))}
            </Sidebar>
            <Scrollbar>
              <ScrollEnd><Chevron c="#666" /></ScrollEnd>
              <ScrollThumb />
              <ScrollEnd $bottom><Chevron c="#666" /></ScrollEnd>
            </Scrollbar>
            <Results>
              {results.map((r, i) => (
                <ResultRow key={i} $selected={r.selected}>
                  <FileCell>
                    <Doc />
                    <FileText>
                      <FileName><Hit>{r.hit}</Hit>{r.rest}</FileName>
                      <FilePath>{r.path}</FilePath>
                    </FileText>
                  </FileCell>
                  <MetaCell>
                    <span>Date modified: <MetaValue>{r.date}</MetaValue></span>
                    <span>Size: <MetaValue>{r.size}</MetaValue></span>
                  </MetaCell>
                </ResultRow>
              ))}
            </Results>
          </Content>
          <StatusBar>
            <span>5 items</span>
            <span>1 item selected  4.41 KB</span>
          </StatusBar>
        </Explorer>

        <ErrorBox>
          connection<br />actively refused it.
        </ErrorBox>
        <PageIcons>
          <Ic s={8}><rect width="5" height="8" fill="#dde4ec" stroke="#aab" strokeWidth=".5" /><path d="M6 2h2M6 4h2M6 6h2" stroke="#9aa8b8" /></Ic>
          <Dot c="#5a80b0" s={6} inner="#c8d8e8" />
        </PageIcons>
        <Activate>
          Activate Windows
          <ActivateHint>Go to Settings to activate Windows.</ActivateHint>
        </Activate>
        <Menu>
          {menu.map((m, i) =>
            m.line ? (
              <MenuLine key={i} />
            ) : (
              <MenuItem key={i} $bold={m.bold} $hover={m.hover}>
                <MenuIcon>{m.icon}</MenuIcon>
                {m.label}
                {m.arrow && <MenuArrow><Caret /></MenuArrow>}
              </MenuItem>
            )
          )}
        </Menu>
        <Cursor width="6" height="9" viewBox="0 0 6 9">
          <path d="M2 .5v4.500L1 4.500.5 5.500 2.500 8.500h3V4.500L3 3.800V.5z" fill="#fff" stroke="#333" strokeWidth=".5" />
        </Cursor>
        <Logo>
          <LogoText>MSK</LogoText>
          <LogoSub>TECHNOLOGIES</LogoSub>
        </Logo>
      </Page>

      <Taskbar>
        {task.map((t, i) => (
          <TaskSlot key={i} $active={t.active} $open={t.open}>
            {t.icon}
          </TaskSlot>
        ))}
        <Tray>
          MSK-MENU
          <TrayIcons>
            <span>»</span>
            <Arrow dir="up" c="#c8ced2" s={6} />
            {trayIcons.map((g) => (
              <Ic key={g.key} s={7}>{g}</Ic>
            ))}
          </TrayIcons>
          <Clock><span>ENG</span><span>FR</span></Clock>
          <Clock $gap={5}><span>23:26</span><span>27/10/2020</span></Clock>
          <NotifySlot>
            <Ic s={9}><path d="M.5 1h7v5H3L1.500 7.500V6h-1z" fill="#d8dde0" /></Ic>
            <NotifyBadge>12</NotifyBadge>
          </NotifySlot>
        </Tray>
      </Taskbar>
    </Screen>
  );
}
